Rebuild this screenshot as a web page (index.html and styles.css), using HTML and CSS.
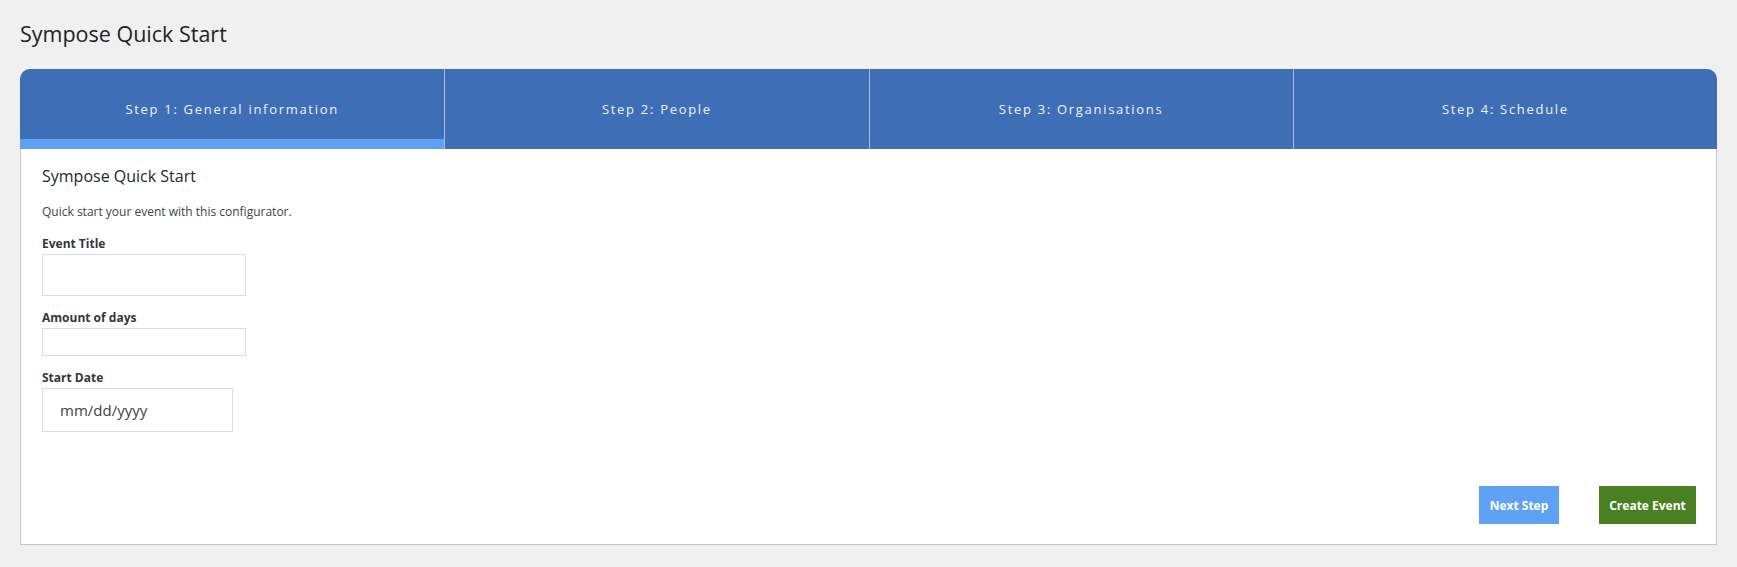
FILE: index.html
```html
<!DOCTYPE html>
<html lang="en">
<head>
    <meta charset="UTF-8">
    <meta name="viewport" content="width=device-width, initial-scale=1.0">
    <title>Sympose Quick Start</title>
    <link rel="stylesheet" href="styles.css">
</head>
<body>
    <div class="wrap">
        <h1 class="page-title">Sympose Quick Start</h1>

        <div class="wizard">
            <div class="steps">
                <div class="step active">Step 1: General information</div>
                <div class="step">Step 2: People</div>
                <div class="step">Step 3: Organisations</div>
                <div class="step">Step 4: Schedule</div>
            </div>

            <div class="step-body">
                <h2>Sympose Quick Start</h2>
                <p class="intro">Quick start your event with this configurator.</p>

                <label for="event-title">Event Title</label>
                <input id="event-title" class="field field-tall" type="text">

                <label for="event-days">Amount of days</label>
                <input id="event-days" class="field" type="text">

                <label for="event-start">Start Date</label>
                <input id="event-start" class="field field-date" type="text" placeholder="mm/dd/yyyy">

                <div class="actions">
                    <button class="btn btn-next">Next Step</button>
                    <button class="btn btn-create">Create Event</button>
                </div>
            </div>
        </div>
    </div>
</body>
</html>
```

FILE: styles.css
```css
body {
    margin: 0;
    background: #f0f0f0;
    color: #23282d;
    font-family: "Open Sans", "Noto Sans", sans-serif;
}

.wrap {
    padding: 0 20px;
}

.page-title {
    margin: 19px 0 20px;
    font-size: 21.5px;
    font-weight: 400;
    line-height: 30px;
    color: #1d2327;
}

.wizard {
    background: #fff;
    border: 1px solid #c5c5c5;
    border-top: none;
    border-radius: 10px 10px 0 0;
}

.steps {
    display: grid;
    grid-template-columns: repeat(4, 1fr);
    height: 80px;
    margin: 0 -1px;
    background: #3e6fb6;
    border-radius: 10px 10px 0 0;
    overflow: hidden;
}

.step {
    display: flex;
    align-items: center;
    justify-content: center;
    color: #eef3fb;
    font-size: 13px;
    letter-spacing: 1.7px;
}

.step + .step {
    border-left: 1px solid #a8bfe0;
}

.step.active {
    box-shadow: inset 0 -10px 0 #5fa2f5;
}

.step-body {
    padding: 16px 20px 20px 21px;
}

.step-body h2 {
    margin: 0 0 16px;
    font-size: 16px;
    font-weight: 400;
    line-height: 22px;
}

.intro {
    margin: 0 0 14px;
    font-size: 12px;
    line-height: 18px;
    color: #3c434a;
}

label {
    display: block;
    margin: 13px 0 1px;
    font-size: 12px;
    font-weight: 700;
    line-height: 18px;
    color: #32373c;
}

.intro + label {
    margin-top: 0;
}

.field {
    display: block;
    box-sizing: border-box;
    width: 204px;
    height: 28px;
    margin: 0;
    border: 1px solid #dcdcde;
    background: #fff;
    font-family: inherit;
}

.field-tall {
    height: 42px;
}

.field-date {
    width: 191px;
    height: 44px;
    padding: 0 0 0 17px;
    font-size: 15px;
}

.field-date::placeholder {
    color: #444;
}

.actions {
    display: flex;
    justify-content: flex-end;
    gap: 40px;
    margin-top: 54px;
}

.btn {
    height: 38px;
    padding: 0 10px;
    border: none;
    color: #fff;
    font-family: inherit;
    font-size: 12px;
    font-weight: 700;
    cursor: pointer;
}

.btn-next {
    width: 80px;
    background: #5fa2f5;
}

.btn-create {
    width: 97px;
    background: #4a7f22;
}
```
